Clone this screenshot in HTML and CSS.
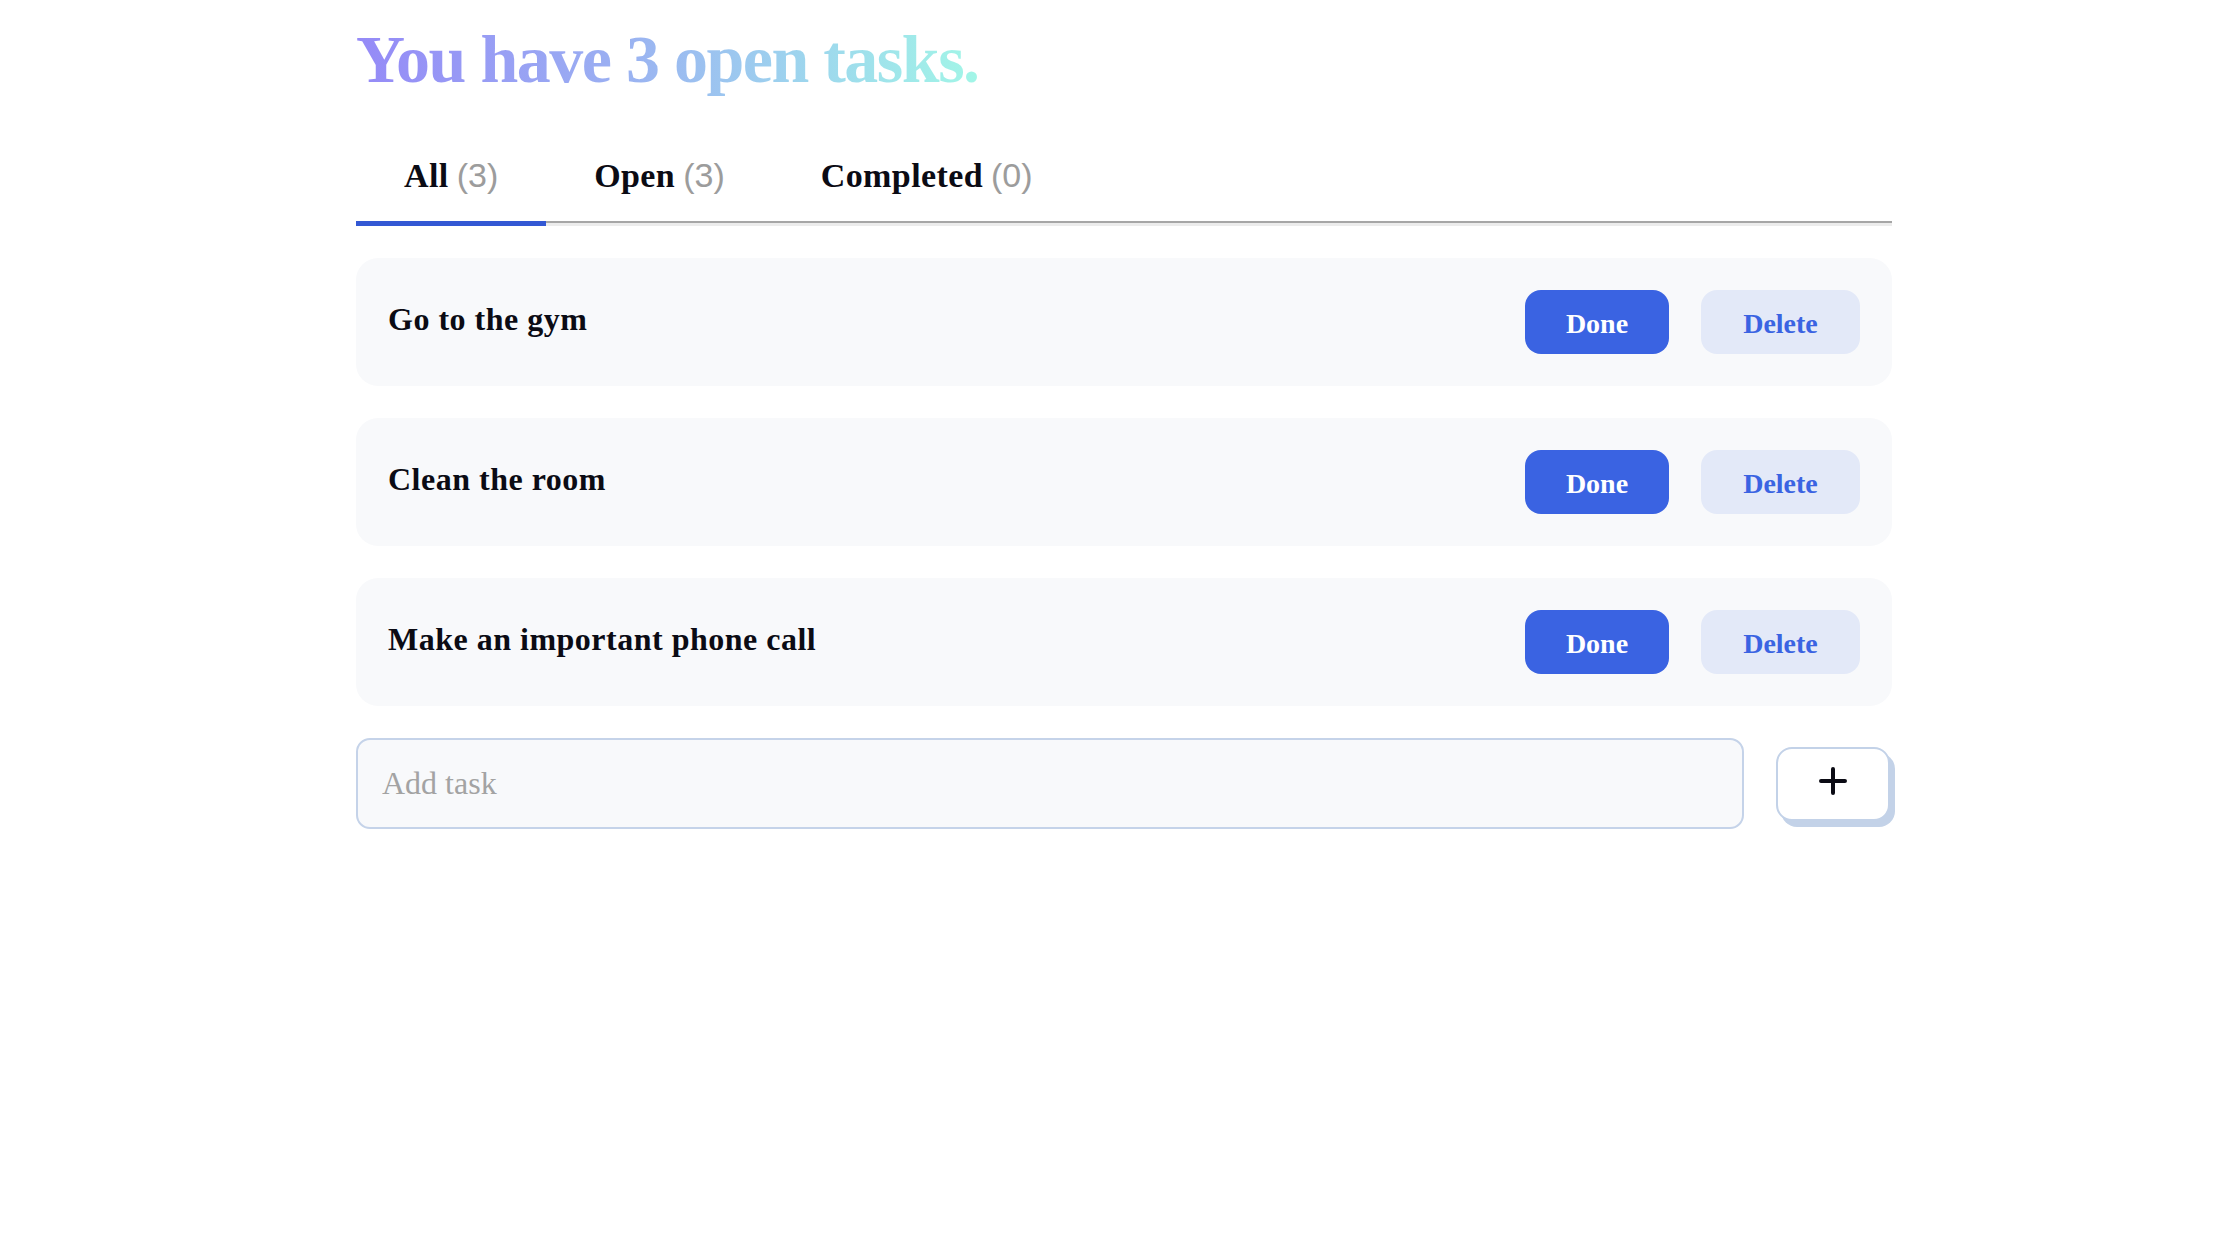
FILE: index.html
```html
<!DOCTYPE html>
<html lang="en">
<head>
<meta charset="utf-8">
<title>Tasks</title>
<link rel="stylesheet" href="styles.css">
</head>
<body>
<main class="page">
  <h1 class="title">You have 3 open tasks.</h1>
  <nav class="tabs">
    <div class="tab active"><span class="tab-label">All</span><span class="tab-count">(3)</span></div>
    <div class="tab"><span class="tab-label">Open</span><span class="tab-count">(3)</span></div>
    <div class="tab"><span class="tab-label">Completed</span><span class="tab-count">(0)</span></div>
  </nav>
  <ul class="task-list">
    <li class="task">
      <span class="task-text">Go to the gym</span>
      <div class="task-actions">
        <button class="btn btn-done">Done</button>
        <button class="btn btn-delete">Delete</button>
      </div>
    </li>
    <li class="task">
      <span class="task-text">Clean the room</span>
      <div class="task-actions">
        <button class="btn btn-done">Done</button>
        <button class="btn btn-delete">Delete</button>
      </div>
    </li>
    <li class="task">
      <span class="task-text">Make an important phone call</span>
      <div class="task-actions">
        <button class="btn btn-done">Done</button>
        <button class="btn btn-delete">Delete</button>
      </div>
    </li>
  </ul>
  <form class="add-row">
    <input class="add-input" type="text" placeholder="Add task">
    <button class="add-btn" type="button" aria-label="Add">
      <svg width="28" height="28" viewBox="0 0 28 28"><path d="M14 2 V26 M2 14 H26" stroke="#0b0b14" stroke-width="4" stroke-linecap="round"/></svg>
    </button>
  </form>
</main>
</body>
</html>
```

FILE: styles.css
```css
* { box-sizing: border-box; }

html, body {
  background: #ffffff;
}

body {
  margin: 0;
  padding-left: 10px;
  font-family: "Liberation Serif", "Times New Roman", serif;
  color: #0b0b14;
}

.page {
  width: 1536px;
  margin: 0 auto;
}

.title {
  margin: 22px 0 34px;
  font-size: 68px;
  line-height: 75px;
  font-weight: 700;
  letter-spacing: -1.5px;
  display: inline-block;
  background: linear-gradient(90deg, #958af7 0%, #9aaef2 40%, #9dd3ee 70%, #a2f6e7 100%);
  -webkit-background-clip: text;
  background-clip: text;
  color: transparent;
}

.tabs {
  display: flex;
  border-bottom: 2px solid #a6a6a6;
  box-shadow: 0 3px 0 #ececec;
}

.tab {
  position: relative;
  padding: 24px 48px 25px;
  line-height: 40px;
  display: flex;
  align-items: baseline;
  gap: 8px;
}

.tab-label {
  font-size: 34px;
  font-weight: 700;
  letter-spacing: 0.4px;
  color: #0b0b14;
}

.tab-count {
  font-family: "Liberation Sans", Arial, sans-serif;
  font-size: 34px;
  font-weight: 400;
  color: #9c9c9c;
}

.tab.active::after {
  content: "";
  position: absolute;
  left: 0;
  right: 0;
  bottom: -5px;
  height: 5px;
  background: #3358d4;
}

.task-list {
  list-style: none;
  margin: 35px 0 0;
  padding: 0;
  display: flex;
  flex-direction: column;
  gap: 32px;
}

.task {
  background: #f8f9fb;
  border-radius: 22px;
  padding: 32px;
  display: flex;
  align-items: center;
  justify-content: space-between;
}

.task-text {
  font-size: 32px;
  font-weight: 700;
  letter-spacing: 0.5px;
  margin-bottom: 6px;
}

.task-actions {
  display: flex;
  gap: 32px;
}

.btn {
  height: 64px;
  border: none;
  border-radius: 16px;
  font-family: "Liberation Serif", "Times New Roman", serif;
  font-size: 28px;
  font-weight: 700;
  padding: 3px 0 0;
}

.btn-done {
  width: 144px;
  background: #3a63e2;
  color: #ffffff;
}

.btn-delete {
  width: 159px;
  background: #e3e9f8;
  color: #3a63e2;
}

.add-row {
  margin-top: 32px;
  display: flex;
  align-items: center;
  gap: 32px;
}

.add-input {
  flex: 1;
  height: 91px;
  border: 2px solid #c5d3e9;
  border-radius: 14px;
  background: #f8f9fb;
  padding: 0 24px;
  font-family: "Liberation Serif", "Times New Roman", serif;
  font-size: 32px;
  color: #0b0b14;
}

.add-input::placeholder {
  color: #a3a3a3;
}

.add-btn {
  width: 114px;
  height: 74px;
  margin-right: 2px;
  border: 2px solid #c3d2e8;
  border-radius: 16px;
  background: #ffffff;
  box-shadow: 5px 6px 0 #c3d2e8;
  display: flex;
  align-items: center;
  justify-content: center;
  padding: 0 0 6px;
}
```
